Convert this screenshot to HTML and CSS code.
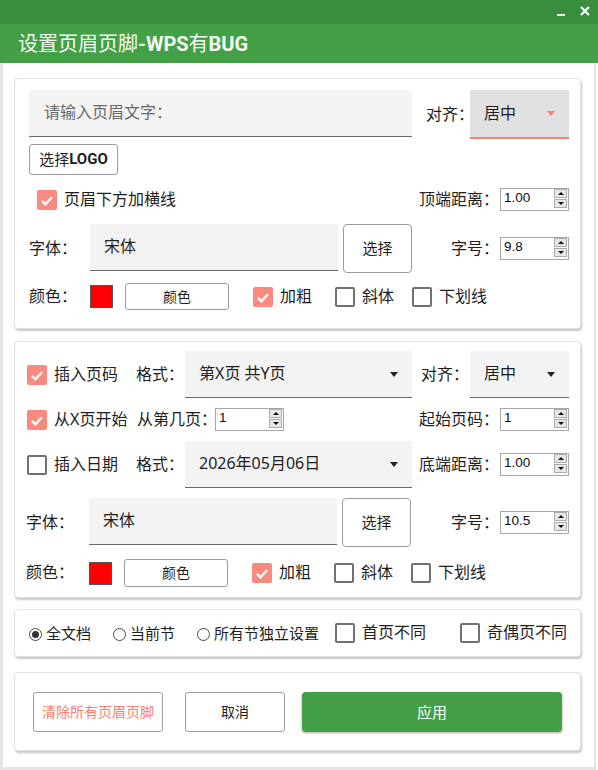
FILE: index.html
```html
<!DOCTYPE html>
<html lang="zh-CN">
<head>
<meta charset="utf-8">
<title>设置页眉页脚</title>
<link rel="stylesheet" href="styles.css">
</head>
<body>
<div class="window">
  <div class="titlebar">
    <svg class="tb-min" width="8" height="2" viewBox="0 0 8 2"><rect x="0" y="0" width="8" height="2" fill="#fff"/></svg>
    <svg class="tb-close" width="10" height="10" viewBox="0 0 10 10"><path d="M1 1L9 9M9 1L1 9" stroke="#fff" stroke-width="2.2" fill="none"/></svg>
  </div>
  <div class="header"><h1>设置页眉页脚<b>-WPS</b>有<b>BUG</b></h1></div>

  <div class="body">
    <!-- Card 1: header -->
    <section class="card c1">
      <div class="row r-a">
        <div class="field hdr-text"><span class="ph">请输入页眉文字：</span></div>
        <span class="lbl l-align1">对齐：</span>
        <div class="select accent w99"><span>居中</span><i class="arrow"></i></div>
      </div>
      <div class="row r-b">
        <button class="btn logo">选择<b>LOGO</b></button>
      </div>
      <div class="row r-c">
        <div class="check on ml8"><span class="box"><svg viewBox="0 0 20 20" width="20" height="20"><path d="M5 10.8l3.4 3.4 6.6-7" fill="none" stroke="#fff" stroke-width="2.4"/></svg></span><span class="txt">页眉下方加横线</span></div>
        <span class="lbl push">顶端距离：</span>
        <div class="spin"><span class="val">1.00</span><span class="btns"><i class="up"></i><i class="dn"></i></span></div>
      </div>
      <div class="row r-d">
        <span class="lbl w61">字体：</span>
        <div class="field font-field"><span>宋体</span></div>
        <button class="btn pick">选择</button>
        <span class="lbl push">字号：</span>
        <div class="spin"><span class="val">9.8</span><span class="btns"><i class="up"></i><i class="dn"></i></span></div>
      </div>
      <div class="row r-e">
        <span class="lbl w61">颜色：</span>
        <span class="swatch"></span>
        <button class="btn color">颜色</button>
        <div class="check on ml24"><span class="box"><svg viewBox="0 0 20 20" width="20" height="20"><path d="M5 10.8l3.4 3.4 6.6-7" fill="none" stroke="#fff" stroke-width="2.4"/></svg></span><span class="txt">加粗</span></div>
        <div class="check off ml23"><span class="box"></span><span class="txt">斜体</span></div>
        <div class="check off ml18"><span class="box"></span><span class="txt">下划线</span></div>
      </div>
    </section>

    <!-- Card 2: footer -->
    <section class="card c2">
      <div class="row r1">
        <div class="check on w109"><span class="box"><svg viewBox="0 0 20 20" width="20" height="20"><path d="M5 10.8l3.4 3.4 6.6-7" fill="none" stroke="#fff" stroke-width="2.4"/></svg></span><span class="txt">插入页码</span></div>
        <span class="lbl w49">格式：</span>
        <div class="select w227"><span>第X页 共Y页</span><i class="arrow"></i></div>
        <span class="lbl w49 ml9">对齐：</span>
        <div class="select w99"><span>居中</span><i class="arrow"></i></div>
      </div>
      <div class="row r2">
        <div class="check on w110"><span class="box"><svg viewBox="0 0 20 20" width="20" height="20"><path d="M5 10.8l3.4 3.4 6.6-7" fill="none" stroke="#fff" stroke-width="2.4"/></svg></span><span class="txt">从X页开始</span></div>
        <span class="lbl w78">从第几页：</span>
        <div class="spin"><span class="val">1</span><span class="btns"><i class="up"></i><i class="dn"></i></span></div>
        <span class="lbl push">起始页码：</span>
        <div class="spin"><span class="val">1</span><span class="btns"><i class="up"></i><i class="dn"></i></span></div>
      </div>
      <div class="row r3">
        <div class="check off w109"><span class="box"></span><span class="txt">插入日期</span></div>
        <span class="lbl w49">格式：</span>
        <div class="select w227"><span>2026年05月06日</span><i class="arrow"></i></div>
        <span class="lbl push">底端距离：</span>
        <div class="spin"><span class="val">1.00</span><span class="btns"><i class="up"></i><i class="dn"></i></span></div>
      </div>
      <div class="row r4">
        <span class="lbl w63">字体：</span>
        <div class="field font-field"><span>宋体</span></div>
        <button class="btn pick">选择</button>
        <span class="lbl push">字号：</span>
        <div class="spin"><span class="val">10.5</span><span class="btns"><i class="up"></i><i class="dn"></i></span></div>
      </div>
      <div class="row r5">
        <span class="lbl w63">颜色：</span>
        <span class="swatch"></span>
        <button class="btn color tall">颜色</button>
        <div class="check on ml24"><span class="box"><svg viewBox="0 0 20 20" width="20" height="20"><path d="M5 10.8l3.4 3.4 6.6-7" fill="none" stroke="#fff" stroke-width="2.4"/></svg></span><span class="txt">加粗</span></div>
        <div class="check off ml23"><span class="box"></span><span class="txt">斜体</span></div>
        <div class="check off ml18"><span class="box"></span><span class="txt">下划线</span></div>
      </div>
    </section>

    <!-- Card 3: scope -->
    <section class="card c3">
      <div class="row scope">
        <div class="opt"><span class="radio on"></span><span class="rtxt">全文档</span></div>
        <div class="opt ml22"><span class="radio"></span><span class="rtxt">当前节</span></div>
        <div class="opt ml22"><span class="radio"></span><span class="rtxt">所有节独立设置</span></div>
        <div class="check off ml16"><span class="box"></span><span class="txt">首页不同</span></div>
        <div class="check off ml34"><span class="box"></span><span class="txt">奇偶页不同</span></div>
      </div>
    </section>

    <!-- Card 4: actions -->
    <section class="card c4">
      <div class="row actions">
        <button class="btn act clear">清除所有页眉页脚</button>
        <button class="btn act cancel">取消</button>
        <button class="btn act apply">应用</button>
      </div>
    </section>
  </div>
</div>
</body>
</html>
```

FILE: styles.css
```css
html, body {
  margin: 0;
  padding: 0;
  background: #fff;
}
body {
  font-family: "Noto Sans", "Noto Sans CJK SC", sans-serif;
  color: #1e1e1e;
  line-height: 1.2;
}
.window {
  width: 598px;
  height: 770px;
  overflow: hidden;
}

/* title bar */
.titlebar {
  height: 24px;
  background: #388e3c;
  display: flex;
  justify-content: flex-end;
  align-items: flex-start;
}
.tb-min { margin-top: 14px; display: block; }
.tb-close { margin-top: 6px; margin-left: 15px; margin-right: 8px; display: block; }
.header {
  height: 39px;
  background: #43a047;
  display: flex;
  align-items: center;
  padding-left: 18px;
}
.header h1 {
  margin: 0;
  font-size: 20px;
  font-weight: normal;
  color: #f4f8f4;
  line-height: 1;
  font-family: "Noto Sans CJK SC", sans-serif;
}
.header h1 b {
  font-family: "Roboto", "Noto Sans", sans-serif;
  font-weight: bold;
}

/* window body */
.body {
  box-sizing: border-box;
  width: 596px;
  height: 707px;
  border-left: 3px solid #e4e4e4;
  border-right: 2px solid #e4e4e4;
  border-bottom: 3px solid #e4e4e4;
  padding-top: 15px;
}
.card {
  box-sizing: border-box;
  width: 567px;
  margin-left: 11px;
  border: 1px solid #e1e1e1;
  border-radius: 4px;
  background: #fff;
  box-shadow: 1px 2px 2px rgba(0, 0, 0, 0.22);
}
.c1 { padding: 11px 11px 18px 14px; }
.c2 { margin-top: 12px; padding: 9px 11px 10px 12px; }
.c3 { margin-top: 11px; height: 48px; padding: 0 11px 0 14px; display: flex; align-items: center; }
.c4 { margin-top: 15px; padding: 19px 11px 18px 18px; }

.row { display: flex; align-items: center; }
.lbl { font-size: 16px; white-space: nowrap; flex: none; }
.push { margin-left: auto; margin-right: 1px; }

/* card 1 rows */
.r-a { height: 49px; align-items: flex-start; }
.r-a .lbl { align-self: center; }
.l-align1 { margin-left: 14px; width: 44px; }
.r-b { margin-top: 5px; height: 31px; }
.r-c { margin-top: 13px; height: 23px; }
.r-d { margin-top: 13px; height: 49px; }
.r-e { margin-top: 10px; height: 27px; }

/* card 2 rows */
.r1 { height: 47px; }
.r2 { margin-top: 10px; height: 23px; }
.r3 { margin-top: 10px; height: 47px; }
.r4 { margin-top: 10px; height: 49px; }
.r5 { margin-top: 12px; height: 28px; }

.w49 { width: 49px; }
.w61 { width: 61px; }
.w63 { width: 63px; margin-left: -1px; }
.w78 { width: 78px; }
.w109 { width: 109px; }
.w110 { width: 110px; }
.ml8 { margin-left: 8px; }
.ml9 { margin-left: 9px; }
.ml16 { margin-left: 16px; }
.ml18 { margin-left: 18px; }
.ml22 { margin-left: 22px; }
.ml23 { margin-left: 23px; }
.ml24 { margin-left: 24px; }
.ml34 { margin-left: 34px; }

/* text fields */
.field {
  box-sizing: border-box;
  height: 47px;
  background: #f3f3f3;
  border-bottom: 1px solid #6a6a6a;
  display: flex;
  align-items: center;
  padding-left: 14px;
  font-size: 16px;
  flex: none;
}
.hdr-text { width: 383px; padding-left: 15px; }
.hdr-text .ph { color: #6a6a6a; }
.font-field { width: 248px; align-self: flex-start; }

/* selects */
.select {
  box-sizing: border-box;
  height: 47px;
  background: #f3f3f3;
  border-bottom: 1px solid #6a6a6a;
  display: flex;
  align-items: center;
  padding-left: 14px;
  padding-right: 14px;
  font-size: 16px;
  flex: none;
}
.select .arrow {
  margin-left: auto;
  width: 0;
  height: 0;
  border-left: 4px solid transparent;
  border-right: 4px solid transparent;
  border-top: 5px solid #222;
}
.select.accent {
  height: 49px;
  background: #e0e0e0;
  border-bottom: 2px solid #fa8072;
}
.select.accent .arrow { border-top-color: #fa8072; }
.w99 { width: 99px; }
.w227 { width: 227px; }

/* spin boxes */
.spin {
  box-sizing: border-box;
  width: 69px;
  height: 23px;
  border: 1px solid #a7a7a7;
  background: #fff;
  display: flex;
  align-items: flex-start;
  flex: none;
}
.spin .val {
  font-family: "Liberation Sans", sans-serif;
  font-size: 13.5px;
  color: #0d0d1a;
  padding-left: 3px;
  line-height: 17px;
}
.spin .btns {
  margin-left: auto;
  margin-right: 1px;
  margin-top: 0;
  display: flex;
  flex-direction: column;
  gap: 1px;
}
.spin .btns i {
  box-sizing: border-box;
  width: 13px;
  height: 9px;
  background: #e7e7e7;
  border: 1px solid #adadad;
  display: flex;
  align-items: center;
  justify-content: center;
}
.spin .btns i::after {
  content: "";
  width: 0;
  height: 0;
  border-left: 3px solid transparent;
  border-right: 3px solid transparent;
}
.spin .btns .up::after { border-bottom: 3px solid #111; }
.spin .btns .dn::after { border-top: 3px solid #111; }

/* buttons */
.btn {
  box-sizing: border-box;
  margin: 0;
  padding: 0;
  background: #fff;
  border: 1px solid #9c9c9c;
  border-radius: 3px;
  font-family: "Noto Sans", "Noto Sans CJK SC", sans-serif;
  color: #1e1e1e;
  display: flex;
  align-items: center;
  justify-content: center;
  flex: none;
  line-height: 1;
}
.logo { width: 89px; height: 31px; font-size: 15px; }
.logo b { font-family: "Roboto", sans-serif; font-weight: bold; }
.pick { width: 69px; height: 49px; margin-left: 5px; font-size: 15px; border-radius: 4px; }
.color { width: 104px; height: 27px; margin-left: 12px; font-size: 14px; }
.color.tall { height: 28px; }

.swatch {
  box-sizing: border-box;
  width: 23px;
  height: 23px;
  background: #ff0000;
  border: 1px solid #555;
  flex: none;
}

/* checkboxes */
.check { display: flex; align-items: center; flex: none; }
.check .box {
  box-sizing: border-box;
  width: 20px;
  height: 20px;
  border-radius: 2px;
  flex: none;
  display: block;
}
.check .box svg { display: block; }
.check.on .box { background: #fa8a80; }
.check.off .box { border: 2px solid #717171; background: #fff; }
.check .txt { margin-left: 7px; font-size: 16px; white-space: nowrap; }

/* radios */
.opt { display: flex; align-items: center; flex: none; }
.radio {
  box-sizing: border-box;
  width: 13px;
  height: 13px;
  border: 1px solid #4a4a4a;
  border-radius: 50%;
  display: flex;
  align-items: center;
  justify-content: center;
  margin-top: 2px;
}
.radio.on::after {
  content: "";
  width: 7px;
  height: 7px;
  border-radius: 50%;
  background: #333;
}
.rtxt { margin-left: 4px; font-size: 15px; white-space: nowrap; }

/* actions */
.act { height: 40px; font-size: 14px; }
.clear { width: 130px; color: #fa8072; }
.cancel { width: 100px; margin-left: 22px; }
.apply {
  width: 260px;
  margin-left: 17px;
  background: #43a047;
  border: none;
  border-radius: 4px;
  color: #fff;
  font-size: 15px;
  box-shadow: 0 1px 3px rgba(0, 0, 0, 0.35);
}
```
